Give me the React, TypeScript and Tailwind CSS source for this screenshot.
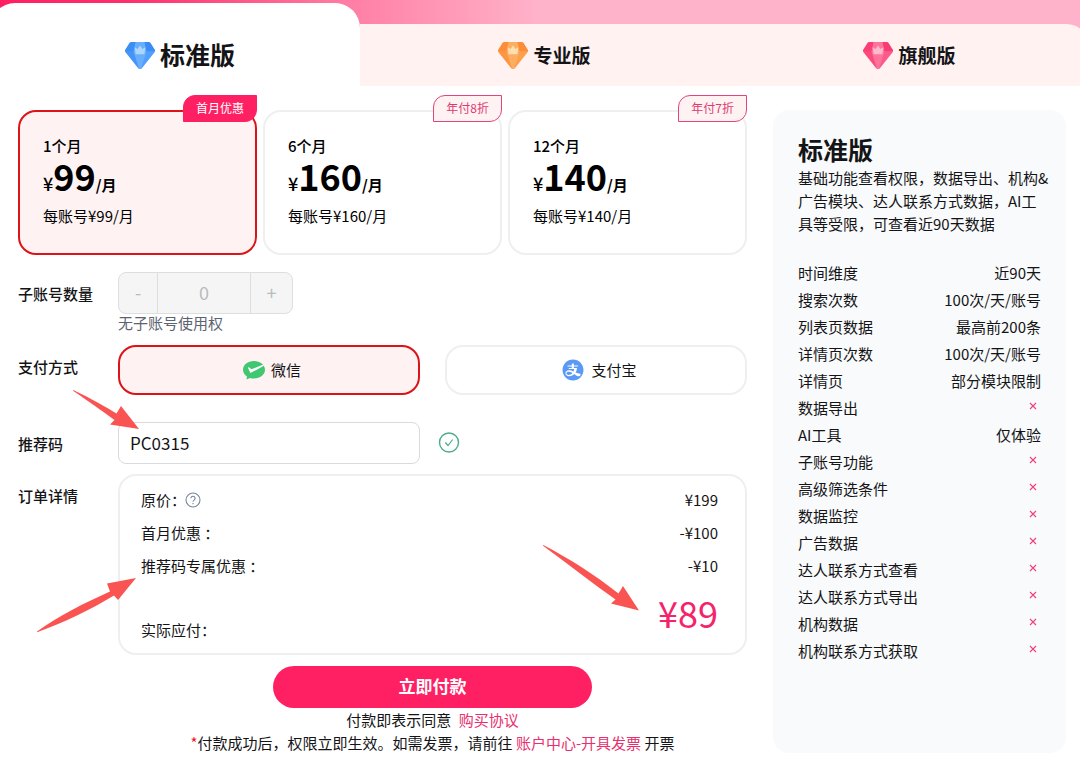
import { useState } from "react";
import { AiFillAlipayCircle } from "react-icons/ai";

type Tone = { base: string; side: string; light: string; crown: string };

const editions: { name: string; tone: Tone }[] = [
  { name: "标准版", tone: { base: "#4495f8", side: "#3385f3", light: "#67aefd", crown: "#acd5ff" } },
  { name: "专业版", tone: { base: "#fd9644", side: "#fc8530", light: "#fdae60", crown: "#ffdfb0" } },
  { name: "旗舰版", tone: { base: "#fc4a7d", side: "#f9326b", light: "#fd739b", crown: "#ffb9cc" } },
];

const plans = [
  { term: "1个月", price: "99", each: "每账号¥99/月", badge: "首月优惠" },
  { term: "6个月", price: "160", each: "每账号¥160/月", badge: "年付8折" },
  { term: "12个月", price: "140", each: "每账号¥140/月", badge: "年付7折" },
];

const features: [string, string | null][] = [
  ["时间维度", "近90天"],
  ["搜索次数", "100次/天/账号"],
  ["列表页数据", "最高前200条"],
  ["详情页次数", "100次/天/账号"],
  ["详情页", "部分模块限制"],
  ["数据导出", null],
  ["AI工具", "仅体验"],
  ["子账号功能", null],
  ["高级筛选条件", null],
  ["数据监控", null],
  ["广告数据", null],
  ["达人联系方式查看", null],
  ["达人联系方式导出", null],
  ["机构数据", null],
  ["机构联系方式获取", null],
];

const charges = [
  { name: "原价：", amount: "¥199", help: true },
  { name: "首月优惠 ：", amount: "-¥100", help: false },
  { name: "推荐码专属优惠 ：", amount: "-¥10", help: false },
];

function Diamond({ tone }: { tone: Tone }) {
  return (
    <svg viewBox="0 0 30 27" className="h-[27px] w-[30px] shrink-0" aria-hidden="true">
      <path
        d="M6.400 0h17.200c.8 0 1.500.4 1.900 1.100l4.200 6.700c.5.8.4 1.700-.2 2.400L17 26c-1 1.300-3 1.300-4 0L.5 10.200c-.6-.7-.7-1.600-.2-2.400l4.200-6.700C4.900.4 5.600 0 6.400 0z"
        fill={tone.base}
      />
      <path d="M.1 9 9 9.200 10.500 0H6.400c-.8 0-1.500.4-1.900 1.100L.3 7.800c-.2.400-.3.800-.2 1.200z" fill={tone.side} opacity="0.5" />
      <path d="M29.900 9 21 9.200 19.500 0h4.100c.8 0 1.500.4 1.900 1.100l4.200 6.700c.2.400.3.800.2 1.200z" fill={tone.side} opacity="0.6" />
      <path d="M29.900 9 21 9.200 15 27c.8 0 1.500-.3 2-1l12.500-15.800c.3-.4.4-.8.4-1.200z" fill={tone.light} opacity="0.4" />
      <path d="M10.500 0h9L21.500 9.500 16 26.500c-.6.4-1.400.4-2 0L8.500 9.500z" fill={tone.light} />
      <path d="M9.700 5.200 12.600 7 15 3.600 17.400 7l2.900-1.800-.9 7.100h-8.800z" fill={tone.crown} />
    </svg>
  );
}

function WechatPay() {
  return (
    <svg viewBox="0 0 22 19" className="h-[19px] w-[22px]" aria-hidden="true">
      <path
        d="M11 0C4.900 0 0 3.900 0 8.800c0 2.700 1.600 5.200 4 6.800L3.500 18.500l3.600-1.600c1.200.4 2.500.6 3.900.6 6.100 0 11-3.900 11-8.700S17.100 0 11 0z"
        fill="#3fc772"
      />
      <path d="M5.100 6.900c-.2-.5.3-.9.7-.6l2.400 1.600c.3.200.6.200.9.100L20 3.800l.8 1L8.400 11.600c-.5.300-1.100.1-1.400-.4z" fill="#fff" />
    </svg>
  );
}

function Cross() {
  return (
    <svg viewBox="0 0 8 8" className="mr-1 mb-1 ml-auto size-2" role="img" aria-label="不支持">
      <path d="M1 1l6 6M7 1L1 7" stroke="#ee3f78" strokeWidth="1.100" fill="none" />
    </svg>
  );
}

export default function App() {
  const [edition, setEdition] = useState(0);
  const [plan, setPlan] = useState(0);
  const [method, setMethod] = useState(0);
  const [code, setCode] = useState("PC0315");

  return (
    <div className="min-h-screen overflow-hidden bg-white font-['Noto_Sans_CJK_SC',sans-serif] text-[15px] leading-[23px] text-[#141416]">
      <header className="bg-[linear-gradient(90deg,#ff1f63_0%,#ff2f6c_12%,#ff80a6_33%,#ffb3ca_50%,#ffb3cb_100%)] pt-[3px]">
        <nav className="-mx-[10px] grid grid-cols-[370fr_369fr_361fr] items-end overflow-hidden rounded-tr-[24px]">
          {editions.map((item, i) => (
            <button
              key={item.name}
              type="button"
              aria-pressed={i === edition}
              onClick={() => setEdition(i)}
              className={
                i === edition
                  ? "flex h-[83px] items-center justify-center gap-[5px] rounded-t-[25px] bg-white pt-[21px] pl-[10px] text-[25px] font-bold"
                  : "flex h-[62px] items-center justify-center gap-[5px] bg-[#fff2f1] text-[19px] font-bold last:rounded-tr-[24px]"
              }
            >
              <Diamond tone={item.tone} />
              <span className="pb-[2px]">{item.name}</span>
            </button>
          ))}
        </nav>
      </header>

      <main className="flex items-start gap-[26px] pt-6 pr-[14px] pb-[18px] pl-[18px]">
        <form className="min-w-0 flex-1" onSubmit={(e) => e.preventDefault()}>
          <div className="grid grid-cols-3 gap-[6px]">
            {plans.map((item, i) => (
              <button
                key={item.term}
                type="button"
                aria-pressed={i === plan}
                onClick={() => setPlan(i)}
                className={
                  i === plan
                    ? "relative h-[145px] rounded-[18px] border-2 border-[#dc1418] bg-[#fff2f2] px-[23px] pb-1 text-left text-black"
                    : "relative h-[145px] rounded-[18px] border-2 border-[#efefef] bg-white px-[23px] pb-1 text-left text-black"
                }
              >
                <span
                  className={
                    i === 0
                      ? "absolute -top-[17px] -right-[2px] rounded-tl-[12px] rounded-br-[12px] border border-[#ff1f63] bg-[#ff1f63] px-3 pb-px text-[12px] leading-[24px] text-white"
                      : "absolute -top-[17px] -right-[2px] rounded-tl-[12px] rounded-br-[12px] border border-[#e0457c] bg-[#fff2f3] px-3 pb-px text-[12px] leading-[24px] text-[#dd3a72]"
                  }
                >
                  {item.badge}
                </span>
                <span className="block font-medium">{item.term}</span>
                <span className="flex items-baseline font-bold">
                  <span className="text-[18px] leading-[18px] font-medium">¥</span>
                  <span className="text-[36px] leading-[36px]">{item.price}</span>
                  <span className="text-[15px] leading-[16px]">/月</span>
                </span>
                <span className="mt-[11px] block">{item.each}</span>
              </button>
            ))}
          </div>

          <div className="mt-[17px] grid grid-cols-[100px_1fr]">
            <label htmlFor="seats" className="pt-[10px] font-medium">
              子账号数量
            </label>
            <div>
              <div className="flex h-[42px] w-[175px] overflow-hidden rounded-[8px] border border-[#dcdee0] bg-[#f5f5f5] text-[#b9bbbe]">
                <button type="button" disabled aria-label="减少" className="w-[39px] border-r border-[#dcdee0] pb-[2px] text-[18px]">
                  -
                </button>
                <input
                  id="seats"
                  disabled
                  value="0"
                  readOnly
                  className="min-w-0 flex-1 pb-[2px] text-center text-[18px]"
                />
                <button type="button" disabled aria-label="增加" className="w-[42px] border-l border-[#dcdee0] pb-[2px] text-[18px]">
                  +
                </button>
              </div>
              <p className="leading-[18px] text-[#5b6470]">无子账号使用权</p>
            </div>
          </div>

          <div className="mt-[13px] grid grid-cols-[100px_1fr]">
            <span className="pt-[10px] font-medium">支付方式</span>
            <div className="grid grid-cols-2 gap-[25px]">
              {["微信", "支付宝"].map((name, i) => (
                <button
                  key={name}
                  type="button"
                  aria-pressed={i === method}
                  onClick={() => setMethod(i)}
                  className={
                    i === method
                      ? "flex h-[50px] items-center justify-center gap-[6px] rounded-[18px] border-2 border-[#dc1418] bg-[#fff2f2] pl-[6px]"
                      : "flex h-[50px] items-center justify-center gap-[6px] rounded-[18px] border-2 border-[#efefef] bg-white pl-[6px]"
                  }
                >
                  {i === 0 ? <WechatPay /> : <AiFillAlipayCircle className="size-6 text-[#5a9af5]" />}
                  <span className="pb-[2px]">{name}</span>
                </button>
              ))}
            </div>
          </div>

          <div className="relative mt-[27px] grid grid-cols-[100px_1fr]">
            <label htmlFor="code" className="pt-[10px] font-medium">
              推荐码
            </label>
            <div className="grid grid-cols-2 items-center gap-[25px]">
              <input
                id="code"
                value={code}
                onChange={(e) => setCode(e.target.value)}
                className="h-[42px] w-full rounded-[8px] border border-[#d9dadc] px-[11px] pb-[2px] text-[17px]"
              />
              <svg viewBox="0 0 22 22" className="-ml-[7px] size-[22px]" role="img" aria-label="有效">
                <circle cx="11" cy="10.500" r="9.500" fill="none" stroke="#4fab8d" strokeWidth="1.400" />
                <path d="M7.300 10.500l2.700 3 4.700-6" fill="none" stroke="#4fab8d" strokeWidth="1.200" />
              </svg>
            </div>
            <svg viewBox="0 0 66 40" className="absolute -top-8 left-[55px] h-10 w-[66px]" aria-hidden="true">
              <path d="M.3 0C18 8.500 33 17 43.500 23.500L48 16 66 39 37 34.500 41.500 30C30 21.500 15 11 0 .8z" fill="#f95452" />
            </svg>
          </div>

          <div className="mt-[10px] grid grid-cols-[100px_1fr]">
            <span className="pt-[10px] font-medium">订单详情</span>
            <div className="relative rounded-[18px] border-2 border-[#efefef] pt-[7px] pr-[27px] pl-[21px]">
              <dl>
                {charges.map((item) => (
                  <div key={item.name} className="flex h-[33px] items-center justify-between">
                    <dt className="flex items-center">
                      {item.name}
                      {item.help && (
                        <svg viewBox="0 0 16 16" className="-ml-px size-4" role="img" aria-label="说明">
                          <circle cx="8" cy="8" r="7" fill="none" stroke="#76879a" strokeWidth="1.100" />
                          <path
                            d="M5.900 6.300a2.100 2.100 0 1 1 3.200 1.800C8.300 8.600 8 8.900 8 9.800M8 11v1.200"
                            fill="none"
                            stroke="#76879a"
                            strokeWidth="1.100"
                          />
                        </svg>
                      )}
                    </dt>
                    <dd>{item.amount}</dd>
                  </div>
                ))}
                <div className="flex h-[71px] items-start justify-between">
                  <dt className="mb-3 self-end">实际应付：</dt>
                  <dd className="text-[36px] leading-[60px] text-[#f5246a]">¥89</dd>
                </div>
              </dl>
              <svg viewBox="0 0 100 55" className="absolute top-[102px] -left-[83px] h-[55px] w-[100px]" aria-hidden="true">
                <path d="M0 53.500C22 38 47 25 73 13.500L70 5.500 99 0 81 22 77 17.500C53 32 28 44 .2 54.300z" fill="#f95452" />
              </svg>
              <svg viewBox="0 0 96 66" className="absolute top-[69px] right-[106px] h-[66px] w-[96px]" aria-hidden="true">
                <path d="M.3 0C27 14 52 30 75.500 48.500L80 41 96 65.500 68 58.500 72.500 54.500C49 38 25 19 0 .8z" fill="#f95452" />
              </svg>
            </div>
          </div>

          <div className="mt-[11px] pl-[100px] text-center">
            <button
              type="submit"
              className="mx-auto block h-[42px] w-[319px] rounded-full bg-[#ff1f63] pb-[3px] text-[17px] font-bold text-white"
            >
              立即付款
            </button>
            <p>
              付款即表示同意{" "}
              <a href="#agreement" className="ml-1 text-[#e8306e]">
                购买协议
              </a>
            </p>
            <p className="whitespace-nowrap">
              <span className="text-[#f01818]">*</span>付款成功后，权限立即生效。如需发票，请前往{" "}
              <a href="#invoice" className="text-[#e8306e]">
                账户中心-开具发票
              </a>{" "}
              开票
            </p>
          </div>
        </form>

        <aside className="min-h-[643px] w-[293px] shrink-0 rounded-[16px] bg-[#f8fafb] px-[25px] pt-[22px]">
          <h2 className="text-[25px] leading-[34px] font-bold">标准版</h2>
          <p className="whitespace-nowrap">
            基础功能查看权限，数据导出、机构&
            <br />
            广告模块、达人联系方式数据，AI工
            <br />
            具等受限，可查看近90天数据
          </p>
          <table className="mt-6 w-full">
            <tbody>
              {features.map(([name, value]) => (
                <tr key={name} className="h-[27px]">
                  <th scope="row" className="text-left font-normal">
                    {name}
                  </th>
                  <td className="text-right">{value ?? <Cross />}</td>
                </tr>
              ))}
            </tbody>
          </table>
        </aside>
      </main>
    </div>
  );
}
